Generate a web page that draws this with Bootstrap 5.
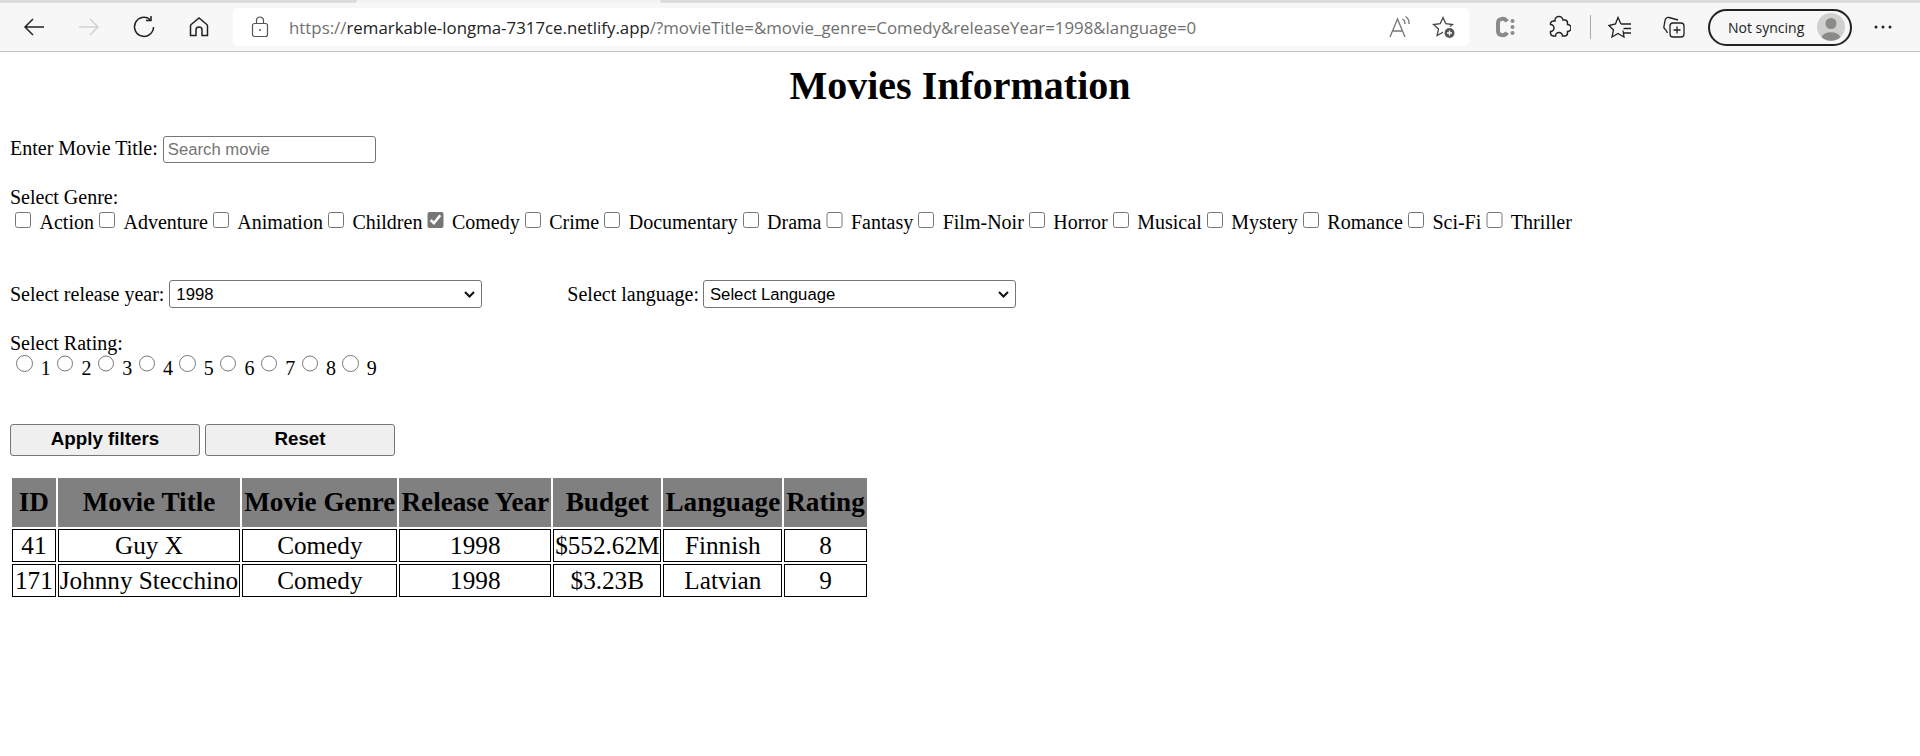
<!DOCTYPE html>
<html lang="en">
<head>
    <meta charset="UTF-8">
    <meta name="viewport" content="width=device-width, initial-scale=1.0">
    <title>Movies Information</title>
    <link href="https://cdn.jsdelivr.net/npm/bootstrap@5.3.0/dist/css/bootstrap.min.css" rel="stylesheet">
    <style>
        body {
            background-color: #fff;
            color: #000;
            font-family: "Liberation Serif", "Times New Roman", serif;
            font-size: 20px;
            line-height: 23px;
        }
        /* browser toolbar */
        .tab-strip { height: 3px; background-color: #f3f3f3; }
        .tab-left { width: 357px; background-color: #dcdcdc; border-bottom-right-radius: 3px; }
        .tab-right { margin-left: 303px; flex: 1; background-color: #dcdcdc; border-bottom-left-radius: 3px; }
        .browser-bar {
            height: 49px;
            background-color: #f7f7f7;
            border-bottom: 1px solid #c4c4c4;
            padding-left: 14px;
        }
        .tool-icon { width: 40px; height: 40px; flex: none; }
        .tool-icon svg { width: 24px; height: 24px; fill: none; stroke: #222; stroke-width: 1.5; }
        .gap-15 { margin-left: 15px; }
        .gap-14 { margin-left: 14px; }
        .url-box {
            width: 1236px;
            height: 38px;
            margin-left: 14px;
            margin-right: 16px;
            padding-left: 18px;
            padding-right: 5px;
            background-color: #fff;
            border-radius: 5px;
            font-family: "Open Sans", sans-serif;
            font-size: 16.85px;
            color: #6f6f6f;
        }
        .url-box b { font-weight: 400; color: #222; }
        .url-text { margin-left: 20px; white-space: nowrap; }
        .tool-sep { width: 1px; height: 24px; background-color: #aaa; margin-left: 11px; margin-right: 9px; }
        .sync-pill {
            width: 144px;
            height: 37px;
            margin-left: 14px;
            margin-right: 11px;
            padding-left: 18px;
            padding-right: 5px;
            border: 2px solid #222;
            border-radius: 19px;
            font-family: "Open Sans", sans-serif;
            font-size: 14px;
            color: #222;
        }
        .avatar-dot { width: 28px; height: 28px; }

        /* page */
        .page-wrap { padding: 0 10px; }
        .page-title {
            font-size: 40px;
            font-weight: 700;
            line-height: 46px;
            text-align: center;
            margin: 11px 0 27px;
        }
        .title-row { margin-bottom: 23px; }
        .genre-row { margin-bottom: 46px; }
        .select-row { margin-bottom: 24px; }
        .rating-row { margin-bottom: 44px; }
        .title-input {
            width: 213px;
            height: 27px;
            padding: 1px 4px;
            border: 1px solid #767676;
            border-radius: 3px;
            font-family: "Liberation Sans", Arial, sans-serif;
            font-size: 16.7px;
            vertical-align: baseline;
        }
        .title-input::placeholder { color: #757575; opacity: 1; }
        .pick-box {
            width: 16.25px;
            height: 16.25px;
            margin: 3px 3.75px 3px 5px;
            vertical-align: 1px;
            accent-color: #767676;
        }
        .pick-box[type="radio"] { margin: 0 3.75px 0 6.25px; vertical-align: 3px; }
        .pick-text { margin-left: 4.5px; }
        .year-select {
            width: 313px;
            height: 28px;
            border: 1px solid #767676;
            border-radius: 3px;
            padding-left: 6px;
            appearance: none;
            background: #fff url("data:image/svg+xml,%3Csvg xmlns='http://www.w3.org/2000/svg' width='11' height='7' viewBox='0 0 11 7'%3E%3Cpath d='M1 1l4.500 4.500L10 1' fill='none' stroke='%23111' stroke-width='2'/%3E%3C/svg%3E") no-repeat right 6px center;
            font-family: "Liberation Sans", Arial, sans-serif;
            font-size: 16.7px;
        }
        .year-label { margin-right: 5px; }
        .lang-label { margin-left: 85px; margin-right: 4px; }
        .btn-row { gap: 5px; }
        .filter-btn {
            width: 190px;
            height: 32px;
            padding: 0;
            border: 1px solid #767676;
            border-radius: 3px;
            background-color: #efefef;
            color: #000;
            font-family: "Liberation Sans", Arial, sans-serif;
            font-size: 18.75px;
            font-weight: 700;
            line-height: 1;
        }
        .movie-grid {
            border-collapse: separate;
            border-spacing: 2px;
            font-size: 25.2px;
            line-height: 29px;
            margin-top: 20px;
        }
        .movie-grid th {
            background-color: #808080;
            padding: 9px 2px;
            font-size: 27.2px;
            line-height: 31px;
            text-align: center;
            font-weight: 700;
        }
        .movie-grid td {
            border: 1px solid #000;
            padding: 1px;
            text-align: center;
        }
        .movie-grid td:first-child { padding-left: 2px; padding-right: 2px; }
    </style>
</head>
<body>
    <!-- Browser toolbar -->
    <div class="tab-strip d-flex">
        <div class="tab-left"></div>
        <div class="tab-right"></div>
    </div>
    <div class="browser-bar d-flex align-items-center">
        <div class="tool-icon d-flex align-items-center justify-content-center">
            <svg viewBox="0 0 24 24"><path d="M22 12H3M11 4l-8 8 8 8"/></svg>
        </div>
        <div class="tool-icon d-flex align-items-center justify-content-center gap-15">
            <svg viewBox="0 0 24 24" style="stroke:#d2d2d2"><path d="M2 12h19M13 4l8 8-8 8"/></svg>
        </div>
        <div class="tool-icon d-flex align-items-center justify-content-center gap-15">
            <svg viewBox="0 0 24 24"><path d="M18 4.500a9.500 9.500 0 1 0 3.500 7.500M19 1v4.500h-5"/></svg>
        </div>
        <div class="tool-icon d-flex align-items-center justify-content-center gap-15">
            <svg viewBox="0 0 24 24"><path d="M3.500 20.500V11a2 2 0 0 1 .7-1.500L12 3l7.800 6.500a2 2 0 0 1 .7 1.500v9.500h-5.500V15a3 3 0 0 0-6 0v5.500z"/></svg>
        </div>
        <div class="url-box d-flex align-items-center">
            <svg width="18" height="22" viewBox="0 0 18 22" fill="none" stroke="#555" stroke-width="1.200"><rect x="1.500" y="7.500" width="15" height="13" rx="2"/><path d="M5.500 7.500V4.500a3.500 3.500 0 0 1 7 0v3"/><circle cx="9" cy="14" r="1" fill="#555" stroke="none"/></svg>
            <span class="url-text">https://<b>remarkable-longma-7317ce.netlify.app</b>/?movieTitle=&amp;movie_genre=Comedy&amp;releaseYear=1998&amp;language=0</span>
            <div class="ms-auto d-flex align-items-center">
                <div class="tool-icon d-flex align-items-center justify-content-center">
                    <svg viewBox="0 0 24 24" style="stroke:#777;stroke-width:1.300"><path d="M2 22 9.500 4 17 22M4.500 16h10M14.500 4a5 5 0 0 1 2.500 5M17.500 1.500a8 8 0 0 1 3.500 7.500"/></svg>
                </div>
                <div class="tool-icon d-flex align-items-center justify-content-center ms-1">
                    <svg viewBox="0 0 24 24" style="stroke:#444;stroke-width:1.300"><path d="M11 2.500l2.800 6.200 6.700.800-5 4.600 1.400 6.500-5.900-3.300-5.900 3.300 1.400-6.500-5-4.600 6.700-.8z"/><circle cx="17.500" cy="18" r="6.500" fill="#fff" stroke="none"/><circle cx="17.500" cy="18" r="5" fill="#555" stroke="none"/><path d="M17.500 15.500v5M15 18h5" stroke="#fff"/></svg>
                </div>
            </div>
        </div>
        <div class="tool-icon d-flex align-items-center justify-content-center">
            <svg viewBox="0 0 24 24" style="stroke:#8a8a8a;stroke-width:4"><path d="M14 6.500C12 2.500 5 3 5 8v8c0 5 7 5.500 9 1.500"/><circle cx="19.500" cy="6" r="2" fill="#8a8a8a" stroke="none"/><circle cx="19.500" cy="12" r="2" fill="#8a8a8a" stroke="none"/><circle cx="19.500" cy="18" r="2" fill="#8a8a8a" stroke="none"/></svg>
        </div>
        <div class="tool-icon d-flex align-items-center justify-content-center gap-14">
            <svg viewBox="0 0 24 24"><path d="M8 6a4 4 0 0 1 8-1h1.500a3 3 0 0 1 3 3v1.500a3.500 3.500 0 0 1 0 7V18a3 3 0 0 1-3 3h-2a3.500 3.500 0 0 0-7 0h-2a3 3 0 0 1-3-3v-1.500a3.500 3.500 0 0 0 0-7V8a3 3 0 0 1 3-2z"/></svg>
        </div>
        <div class="tool-sep"></div>
        <div class="tool-icon d-flex align-items-center justify-content-center">
            <svg viewBox="0 0 24 24" style="stroke-width:1.300"><path d="M13 9h10M15.500 13.500H23M15.500 18H23M15 15.500l1 6.500-6-3.500L4 22l1.500-7L1 10.500 7.500 9 10 2.500 13 9"/></svg>
        </div>
        <div class="tool-icon d-flex align-items-center justify-content-center gap-14">
            <svg viewBox="0 0 24 24" style="stroke-width:1.300"><rect x="8" y="8" width="14" height="14" rx="3"/><path d="M15 11.500v7M11.500 15h7M16 5 7 2.500a3 3 0 0 0-3.700 2L2 11a3 3 0 0 0 1.500 3.500L5.500 18"/></svg>
        </div>
        <div class="sync-pill d-flex align-items-center justify-content-between">
            <span>Not syncing</span>
            <svg class="avatar-dot" viewBox="0 0 28 28"><circle cx="14" cy="14" r="14" fill="#d0d0ce"/><circle cx="14" cy="10.500" r="5.500" fill="#8a8a88"/><path d="M4.500 24a10 7 0 0 1 19 0 14 14 0 0 1-19 0z" fill="#8a8a88"/></svg>
        </div>
        <div class="tool-icon d-flex align-items-center justify-content-center">
            <svg viewBox="0 0 24 24"><circle cx="5" cy="12" r="1.500" fill="#222" stroke="none"/><circle cx="12" cy="12" r="1.500" fill="#222" stroke="none"/><circle cx="19" cy="12" r="1.500" fill="#222" stroke="none"/></svg>
        </div>
    </div>

    <!-- Page content -->
    <div class="page-wrap">
        <h1 class="page-title">Movies Information</h1>
        <form>
            <div class="title-row">
                <label for="movieTitle">Enter Movie Title:</label>
                <input type="text" class="title-input" id="movieTitle" placeholder="Search movie">
            </div>
            <div class="genre-row" id="genreRow"><div>Select Genre:</div></div>
            <div class="select-row d-flex align-items-center">
                <label for="releaseYear" class="year-label">Select release year:</label>
                <select class="year-select" id="releaseYear"><option>1998</option></select>
                <label for="language" class="lang-label">Select language:</label>
                <select class="year-select" id="language"><option>Select Language</option></select>
            </div>
            <div class="rating-row" id="ratingRow"><div>Select Rating:</div></div>
            <div class="d-flex btn-row">
                <button type="button" class="filter-btn">Apply filters</button>
                <button type="button" class="filter-btn">Reset</button>
            </div>
        </form>
        <table class="movie-grid" id="movieTable">
            <thead>
                <tr><th>ID</th><th>Movie Title</th><th>Movie Genre</th><th>Release Year</th><th>Budget</th><th>Language</th><th>Rating</th></tr>
            </thead>
            <tbody></tbody>
        </table>
    </div>

    <script src="https://cdn.jsdelivr.net/npm/bootstrap@5.3.0/dist/js/bootstrap.bundle.min.js"></script>
    <script>
        const genres = ['Action', 'Adventure', 'Animation', 'Children', 'Comedy', 'Crime', 'Documentary', 'Drama', 'Fantasy', 'Film-Noir', 'Horror', 'Musical', 'Mystery', 'Romance', 'Sci-Fi', 'Thriller'];
        const movies = [
            [41, 'Guy X', 'Comedy', 1998, '$552.62M', 'Finnish', 8],
            [171, 'Johnny Stecchino', 'Comedy', 1998, '$3.23B', 'Latvian', 9]
        ];

        // Build genre checkboxes
        const genreLine = document.createElement('div');
        genres.forEach(g => {
            genreLine.innerHTML += `<input type="checkbox" class="pick-box" ${g === 'Comedy' ? 'checked' : ''}><span class="pick-text">${g}</span>`;
        });
        document.getElementById('genreRow').appendChild(genreLine);

        // Build rating radios
        const ratingLine = document.createElement('div');
        for (let i = 1; i <= 9; i++) {
            ratingLine.innerHTML += `<input type="radio" name="rating" class="pick-box"><span class="pick-text">${i}</span>`;
        }
        document.getElementById('ratingRow').appendChild(ratingLine);

        // Fill the table
        document.querySelector('#movieTable tbody').innerHTML = movies.map(m =>
            `<tr>${m.map(v => `<td>${v}</td>`).join('')}</tr>`
        ).join('');
    </script>
</body>
</html>
